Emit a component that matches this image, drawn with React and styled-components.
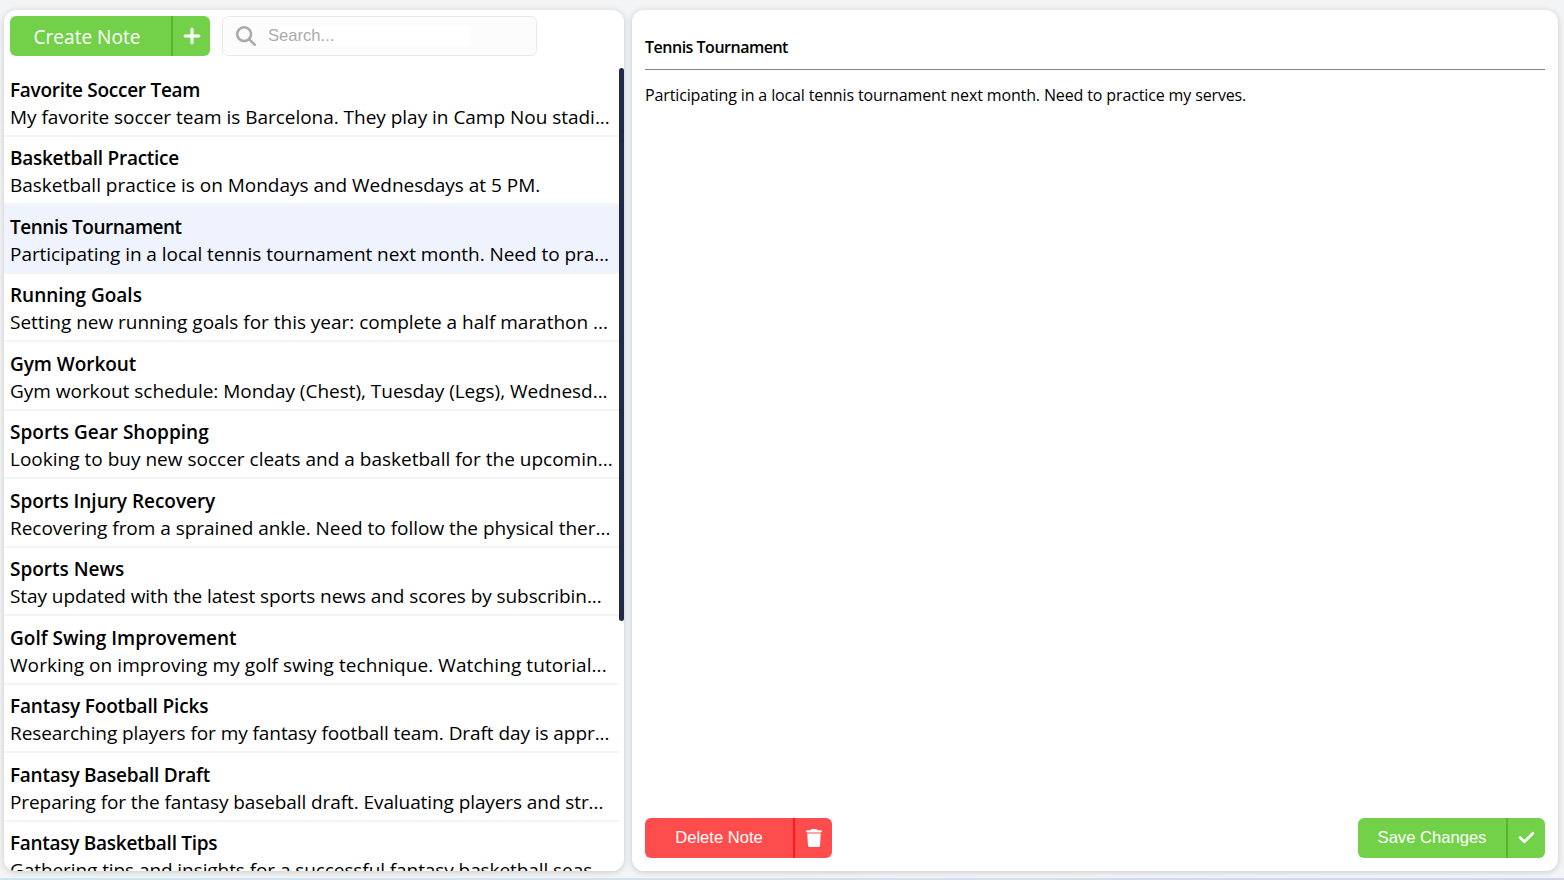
import React, { useState } from "react";
import styled, { createGlobalStyle } from "styled-components";
import { FaPlus, FaCheck, FaMagnifyingGlass, FaTrash } from "react-icons/fa6";

const GlobalStyle = createGlobalStyle`
  * { box-sizing: border-box; }
  body {
    margin: 0;
    background: #f3f4f6;
    color: #000;
    font-family: "Open Sans", sans-serif;
    overflow: hidden;
  }
`;

const Page = styled.div`
  height: 880px;
  display: flex;
  flex-direction: column;
`;

const Columns = styled.main`
  height: 878px;
  padding: 10px 6px 7px 4px;
  display: flex;
  gap: 8px;
`;

const BottomStrip = styled.div`
  height: 2px;
  background: linear-gradient(90deg, #cde4f0, #d3e0f0 50%, #cfd6ea);
`;

const Panel = styled.section`
  background: #fff;
  border-radius: 12px;
  box-shadow: 0 1px 6px rgba(0, 0, 0, 0.18);
  overflow: hidden;
  display: flex;
  flex-direction: column;
`;

const Sidebar = styled(Panel)`
  width: 620px;
  flex: none;
`;

const Editor = styled(Panel)`
  flex: 1;
  padding: 25px 13px 13px 13px;
`;

const Toolbar = styled.div`
  height: 58px;
  flex: none;
  padding: 6px 6px 0;
  display: flex;
  gap: 12px;
`;

const tones = {
  green: { fill: "#72d149", line: "#58b530" },
  red: { fill: "#ff4c4c", line: "#ff1a1a" },
};

const SplitButton = styled.button`
  width: ${(p) => p.$width}px;
  height: 40px;
  padding: 0;
  border: 0;
  border-radius: 6px;
  display: flex;
  overflow: hidden;
  color: #fff;
  background: ${(p) => tones[p.$tone].fill};
  font: ${(p) => p.$font || '16.6px "Liberation Sans", Arial, sans-serif'};
  cursor: pointer;
`;

const ButtonLabel = styled.span`
  flex: 1;
  height: 40px;
  line-height: ${(p) => p.$line || 39}px;
  padding-right: ${(p) => p.$nudge || 0}px;
  text-align: center;
`;

const ButtonIcon = styled.span`
  width: 39px;
  height: 40px;
  padding-bottom: 1px;
  border-left: 2px solid ${(p) => tones[p.$tone].line};
  display: flex;
  align-items: center;
  justify-content: center;
  svg {
    stroke: currentColor;
    stroke-width: ${(p) => p.$weight || 0};
  }
`;

const SearchBox = styled.label`
  width: 315px;
  height: 40px;
  padding-left: 13px;
  border: 1px solid #e8e8e8;
  border-radius: 6px;
  background: #fcfcfc;
  display: flex;
  align-items: center;
  gap: 12px;
  color: #aaa;
`;

const SearchInput = styled.input`
  width: 203px;
  height: 20px;
  padding: 0;
  border: 0;
  outline: 0;
  background: #fff;
  font: 16.6px "Liberation Sans", Arial, sans-serif;
  &::placeholder { color: #aaa; opacity: 1; }
`;

const ListArea = styled.div`
  flex: 1;
  min-height: 0;
  display: flex;
`;

const NoteList = styled.ul`
  flex: 1;
  min-width: 0;
  margin: 0;
  padding: 0;
  list-style: none;
  overflow: hidden;
`;

const ScrollTrack = styled.div`
  width: 5px;
  flex: none;
`;

const ScrollThumb = styled.div`
  width: 5px;
  height: 553px;
  border-radius: 2.5px;
  background: #1f2a48;
`;

const NoteItem = styled.li`
  height: 68.5px;
  padding: 8.5px 0 0 6px;
  border-bottom: 2px solid #f3f4f6;
  background: ${(p) => (p.$active ? "#eff3fe" : "#fff")};
  cursor: pointer;
`;

const NoteTitle = styled.div`
  font-size: 19px;
  font-weight: 600;
  line-height: 27px;
  letter-spacing: ${(p) => p.$tracking}px;
  white-space: nowrap;
`;

const NotePreview = styled(NoteTitle)`
  font-weight: 400;
`;

const EditorTitle = styled.h1`
  margin: 0;
  height: 35px;
  border-bottom: 1px solid #808080;
  font-size: 16px;
  font-weight: 600;
  line-height: 24px;
  letter-spacing: -0.49px;
`;

const EditorBody = styled.p`
  flex: 1;
  margin: 13px 0 0;
  font-size: 16px;
  line-height: 24px;
  letter-spacing: -0.132px;
`;

const Actions = styled.footer`
  display: flex;
  justify-content: space-between;
`;

const notes = [
  { title: "Favorite Soccer Team", tt: -0.27, text: "My favorite soccer team is Barcelona. They play in Camp Nou stadi...", pt: -0.022 },
  { title: "Basketball Practice", tt: -0.27, text: "Basketball practice is on Mondays and Wednesdays at 5 PM.", pt: -0.018 },
  { title: "Tennis Tournament", tt: -0.47, text: "Participating in a local tennis tournament next month. Need to pra...", pt: -0.052 },
  { title: "Running Goals", tt: -0.02, text: "Setting new running goals for this year: complete a half marathon ...", pt: -0.02 },
  { title: "Gym Workout", tt: -0.05, text: "Gym workout schedule: Monday (Chest), Tuesday (Legs), Wednesd...", pt: -0.022 },
  { title: "Sports Gear Shopping", tt: 0.02, text: "Looking to buy new soccer cleats and a basketball for the upcomin...", pt: 0.006 },
  { title: "Sports Injury Recovery", tt: -0.03, text: "Recovering from a sprained ankle. Need to follow the physical ther...", pt: -0.026 },
  { title: "Sports News", tt: -0.02, text: "Stay updated with the latest sports news and scores by subscribin...", pt: -0.075 },
  { title: "Golf Swing Improvement", tt: 0, text: "Working on improving my golf swing technique. Watching tutorial...", pt: 0.078 },
  { title: "Fantasy Football Picks", tt: -0.165, text: "Researching players for my fantasy football team. Draft day is appr...", pt: -0.069 },
  { title: "Fantasy Baseball Draft", tt: -0.265, text: "Preparing for the fantasy baseball draft. Evaluating players and str...", pt: -0.087 },
  { title: "Fantasy Basketball Tips", tt: -0.28, text: "Gathering tips and insights for a successful fantasy basketball seas...", pt: -0.08 },
];

export default function App() {
  const [active, setActive] = useState(2);
  return (
    <>
      <GlobalStyle />
      <Page>
        <Columns>
          <Sidebar>
            <Toolbar>
              <SplitButton $tone="green" $width={200} $font='19.1px "Open Sans", sans-serif'>
                <ButtonLabel $line={43} $nudge={7}>Create Note</ButtonLabel>
                <ButtonIcon $tone="green" $weight={14}><FaPlus size={20} /></ButtonIcon>
              </SplitButton>
              <SearchBox>
                <FaMagnifyingGlass size={20} />
                <SearchInput placeholder="Search..." />
              </SearchBox>
            </Toolbar>
            <ListArea>
              <NoteList>
                {notes.map((note, i) => (
                  <NoteItem key={note.title} $active={i === active} onClick={() => setActive(i)}>
                    <NoteTitle $tracking={note.tt}>{note.title}</NoteTitle>
                    <NotePreview $tracking={note.pt}>{note.text}</NotePreview>
                  </NoteItem>
                ))}
              </NoteList>
              <ScrollTrack><ScrollThumb /></ScrollTrack>
            </ListArea>
          </Sidebar>
          <Editor>
            <EditorTitle>Tennis Tournament</EditorTitle>
            <EditorBody>
              Participating in a local tennis tournament next month. Need to practice my serves.
            </EditorBody>
            <Actions>
              <SplitButton $tone="red" $width={187}>
                <ButtonLabel>Delete Note</ButtonLabel>
                <ButtonIcon $tone="red"><FaTrash size={18} /></ButtonIcon>
              </SplitButton>
              <SplitButton $tone="green" $width={187}>
                <ButtonLabel>Save Changes</ButtonLabel>
                <ButtonIcon $tone="green" $weight={26}><FaCheck size={17} /></ButtonIcon>
              </SplitButton>
            </Actions>
          </Editor>
        </Columns>
        <BottomStrip />
      </Page>
    </>
  );
}
